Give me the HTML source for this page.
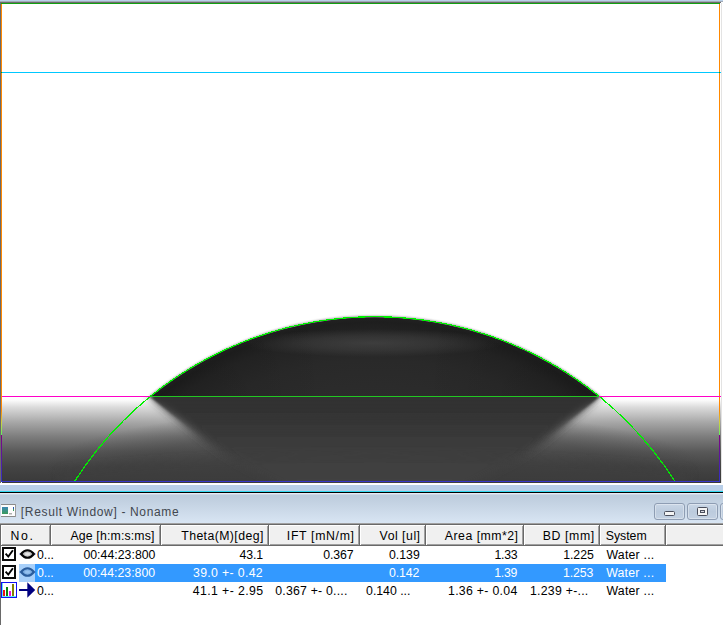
<!DOCTYPE html>
<html><head><meta charset="utf-8">
<style>
html,body{margin:0;padding:0;}
body{width:723px;height:625px;overflow:hidden;background:#fff;font-family:"Liberation Sans",sans-serif;position:relative;}
#img{position:absolute;left:0;top:0;width:723px;height:495px;display:block;}
#title{position:absolute;left:0;top:495px;width:723px;height:28px;background:linear-gradient(#bccbdc,#d8e5f3);}
.tx{position:absolute;white-space:nowrap;}
.hd{position:absolute;top:525px;height:20px;background:#f0f0f0;border-right:1px solid #696969;border-bottom:1px solid #696969;box-shadow:inset 1px 1px 0 #fff, inset -1px -1px 0 #a0a0a0;}
.selbg{position:absolute;left:35px;top:564px;width:631px;height:18px;background:#3399ff;}
.selic{position:absolute;left:19px;top:564px;width:16px;height:18px;background:#a8d0fa;}
.cb{position:absolute;left:2px;width:9px;height:9px;border:2px solid #111;background:#fff;}
.wb{position:absolute;top:503px;height:15px;border:1px solid #8e9db3;border-radius:3px;background:linear-gradient(#c9d6e6,#bccbdd 50%,#c3d1e2);box-shadow:inset 0 0 0 1px rgba(255,255,255,0.35);}
</style></head><body>
<svg id="img" viewBox="0 0 723 495">
<defs>
<linearGradient id="sub" x1="0" y1="0" x2="0" y2="1">
<stop offset="0" stop-color="#ffffff"/>
<stop offset="0.035" stop-color="#fcfcfc"/>
<stop offset="0.116" stop-color="#dcdcdc"/>
<stop offset="0.29" stop-color="#a8a8a8"/>
<stop offset="0.465" stop-color="#7c7c7c"/>
<stop offset="0.64" stop-color="#585858"/>
<stop offset="0.81" stop-color="#444444"/>
<stop offset="1" stop-color="#393939"/>
</linearGradient>
<linearGradient id="reflh" x1="150" y1="0" x2="599" y2="0" gradientUnits="userSpaceOnUse">
<stop offset="0" stop-color="#fff" stop-opacity="0.10"/><stop offset="0.3" stop-color="#fff" stop-opacity="0.03"/><stop offset="0.5" stop-color="#fff" stop-opacity="0"/><stop offset="0.7" stop-color="#fff" stop-opacity="0.03"/><stop offset="1" stop-color="#fff" stop-opacity="0.10"/>
</linearGradient>
<radialGradient id="shade" cx="0.5" cy="0.5" r="0.5">
<stop offset="0" stop-color="#383838" stop-opacity="0.55"/><stop offset="0.7" stop-color="#383838" stop-opacity="0.4"/><stop offset="1" stop-color="#303030" stop-opacity="0"/>
</radialGradient>
<linearGradient id="refl" x1="0" y1="397" x2="0" y2="481" gradientUnits="userSpaceOnUse">
<stop offset="0" stop-color="#303030"/><stop offset="0.5" stop-color="#3a3a3a"/><stop offset="1" stop-color="#424242"/>
</linearGradient>
<linearGradient id="dropv" x1="0" y1="316" x2="0" y2="397" gradientUnits="userSpaceOnUse">
<stop offset="0" stop-color="#1c1c1c"/><stop offset="0.5" stop-color="#2c2c2c"/><stop offset="1" stop-color="#303030"/>
</linearGradient>
<radialGradient id="dropr" cx="374.8" cy="672.5" r="355.8" gradientUnits="userSpaceOnUse">
<stop offset="0.77" stop-color="#2c2c2c"/><stop offset="0.88" stop-color="#292929"/><stop offset="0.95" stop-color="#242424"/><stop offset="0.985" stop-color="#1e1e1e"/><stop offset="1" stop-color="#222222"/>
</radialGradient>
<linearGradient id="droph" x1="150" y1="0" x2="599" y2="0" gradientUnits="userSpaceOnUse">
<stop offset="0" stop-color="#000" stop-opacity="0.12"/><stop offset="0.22" stop-color="#000" stop-opacity="0.06"/><stop offset="0.4" stop-color="#000" stop-opacity="0"/><stop offset="0.6" stop-color="#000" stop-opacity="0"/><stop offset="0.78" stop-color="#000" stop-opacity="0.06"/><stop offset="1" stop-color="#000" stop-opacity="0.12"/>
</linearGradient>
<radialGradient id="hl" cx="0.5" cy="0.5" r="0.5">
<stop offset="0" stop-color="#555" stop-opacity="0.5"/><stop offset="0.5" stop-color="#555" stop-opacity="0.3"/><stop offset="1" stop-color="#555" stop-opacity="0"/>
</radialGradient>
<linearGradient id="mg" x1="0" y1="397" x2="0" y2="436" gradientUnits="userSpaceOnUse"><stop offset="0" stop-color="#fff"/><stop offset="1" stop-color="#000"/></linearGradient>
<mask id="mtop" maskUnits="userSpaceOnUse" x="0" y="390" width="723" height="100"><rect x="0" y="390" width="723" height="100" fill="url(#mg)"/></mask>
<filter id="bl1" x="-5%" y="-20%" width="110%" height="140%"><feGaussianBlur stdDeviation="1.1"/></filter>
<filter id="bl" x="-20%" y="-20%" width="140%" height="140%"><feGaussianBlur stdDeviation="4"/></filter>
<filter id="bl2" x="-20%" y="-50%" width="140%" height="200%"><feGaussianBlur stdDeviation="5"/></filter>
<clipPath id="cdrop"><path d="M150.300 397 A355.8 355.8 0 0 1 599.300 397 Z"/></clipPath>
<clipPath id="cs"><rect x="2" y="397" width="719" height="86"/></clipPath>
<clipPath id="cimg"><rect x="2" y="4" width="717" height="478"/></clipPath>
<linearGradient id="le" x1="0" y1="0" x2="0" y2="1">
<stop offset="0" stop-color="#ff8800"/><stop offset="0.5" stop-color="#d0d040"/><stop offset="1" stop-color="#60f060"/>
</linearGradient>
<linearGradient id="lp" x1="0" y1="0" x2="0" y2="1">
<stop offset="0" stop-color="#800080"/><stop offset="1" stop-color="#3030c8"/>
</linearGradient>
</defs>
<rect x="0" y="0" width="723" height="495" fill="#fff"/>
<!-- top chrome -->
<rect x="0" y="0" width="723" height="1" fill="#b9d1ea"/>
<rect x="0" y="1" width="723" height="1" fill="#a2abb8"/>
<rect x="0" y="2" width="721" height="1" fill="#6a6a6a"/>
<rect x="0" y="2" width="1" height="481" fill="#6a6a6a"/>
<rect x="0" y="483" width="723" height="12" fill="#fff"/>
<rect x="721" y="3" width="1" height="480" fill="#e3e3e3"/>
<!-- substrate -->
<rect x="2" y="397" width="719" height="86" fill="url(#sub)"/>
<g clip-path="url(#cs)">
<ellipse cx="374.8" cy="470" rx="330" ry="62" fill="url(#shade)"/>
<path d="M150.300 380 L150.300 397 L204 440 Q240 468 300 492 L449.600 492 Q509.600 468 545.600 440 L599.300 397 L599.300 380 Z" fill="url(#refl)" filter="url(#bl)"/>
<g mask="url(#mtop)"><path d="M150.300 380 L150.300 397 L204 440 Q240 468 300 492 L449.600 492 Q509.600 468 545.600 440 L599.300 397 L599.300 380 Z" fill="url(#refl)" filter="url(#bl1)"/></g>
<path d="M60 470 Q374 440 690 470 L690 500 L60 500 Z" fill="#404040" opacity="0.45" filter="url(#bl)"/>
</g>
<!-- drop -->
<path d="M150.300 397 A355.8 355.8 0 0 1 599.300 397" fill="none" stroke="#8c8c8c" stroke-width="2.4" filter="url(#bl1)"/>
<g clip-path="url(#cdrop)">
<rect x="140" y="310" width="470" height="90" fill="url(#dropr)"/>
<rect x="140" y="310" width="470" height="90" fill="url(#droph)"/>
<ellipse cx="373" cy="343" rx="130" ry="14" fill="url(#hl)"/>
</g>
<!-- circle fit -->
<g clip-path="url(#cimg)"><circle cx="374.8" cy="672.5" r="355.8" fill="none" stroke="#00f000" stroke-width="1.2" shape-rendering="crispEdges"/></g>
<!-- lines -->
<rect x="1" y="3" width="719" height="1" fill="#10a010"/>
<rect x="1" y="4" width="1" height="406" fill="#ff8800"/>
<rect x="1" y="410" width="1" height="25" fill="url(#le)"/>
<rect x="1" y="435" width="1" height="47" fill="url(#lp)"/>
<rect x="719" y="4" width="1" height="406" fill="#ff8800"/>
<rect x="719" y="410" width="1" height="25" fill="url(#le)"/>
<rect x="719" y="435" width="1" height="47" fill="url(#lp)"/>
<rect x="2" y="72" width="719" height="1" fill="#00c8ff"/><rect x="1" y="72" width="1" height="1" fill="#10a010"/><rect x="719" y="72" width="1" height="1" fill="#10a010"/>
<rect x="2" y="396" width="148" height="1" fill="#ff00c8"/>
<rect x="150" y="396" width="449" height="1" fill="#22c822"/>
<rect x="599" y="396" width="122" height="1" fill="#ff00c8"/>
<rect x="1" y="481" width="719" height="1" fill="#3838c8"/>
<!-- bottom chrome -->
<rect x="0" y="483" width="723" height="2" fill="#ffffff"/>
<rect x="0" y="485" width="723" height="6" fill="#b9cfe8"/>
<rect x="0" y="491" width="723" height="1" fill="#30d8f0"/>
<rect x="0" y="492" width="723" height="1" fill="#000000"/>
<rect x="0" y="493" width="723" height="1" fill="#e6eaf5"/>
<rect x="0" y="494" width="723" height="1" fill="#ccd8e8"/>
</svg>
<div id="title"></div>
<!-- title icon -->
<svg style="position:absolute;left:1px;top:504px" width="15" height="13" viewBox="0 0 15 13">
<rect x="0" y="0" width="15" height="13" fill="#fdfdfd"/>
<rect x="0" y="0" width="15" height="1" fill="#8a8a8a"/><rect x="0" y="12" width="15" height="1" fill="#8a8a8a"/><rect x="14" y="0" width="1" height="13" fill="#9a9a9a"/>
<defs><linearGradient id="ig" x1="0" y1="0" x2="0" y2="1"><stop offset="0" stop-color="#3c86b4"/><stop offset="1" stop-color="#3a9c5c"/></linearGradient></defs>
<rect x="1" y="3" width="6" height="7" fill="url(#ig)"/>
<rect x="8" y="9" width="3" height="1.5" fill="#b0b0b0"/>
<rect x="12" y="3" width="1" height="2" fill="#2a5ab0"/><rect x="12" y="5" width="1" height="2" fill="#3a9c5c"/>
</svg>
<!-- window buttons -->
<div class="wb" style="left:654px;width:29px"></div>
<div class="wb" style="left:687px;width:29px"></div>
<div class="wb" style="left:720px;width:29px"></div>
<svg style="position:absolute;left:654px;top:503px" width="69" height="17" viewBox="0 0 69 17">
<rect x="10.5" y="8.5" width="10" height="4" rx="1" fill="#f4f4f4" stroke="#4a4e5c"/>
<rect x="43.500" y="4.500" width="10" height="8" rx="1" fill="#f4f4f4" stroke="#4a4e5c"/>
<rect x="46.5" y="7.500" width="4" height="2" fill="#d8d8e0" stroke="#4a4e5c"/>
</svg>
<!-- table -->
<div style="position:absolute;left:0;top:523px;width:723px;height:1px;background:#a0a0a0"></div>
<div style="position:absolute;left:0;top:524px;width:723px;height:1px;background:#696969"></div>
<div style="position:absolute;left:0;top:524px;width:1px;height:101px;background:#696969"></div>
<div class="hd" style="left:1px;width:49px"></div>
<div class="hd" style="left:51px;width:109px"></div>
<div class="hd" style="left:161px;width:107px"></div>
<div class="hd" style="left:269px;width:90px"></div>
<div class="hd" style="left:360px;width:65px"></div>
<div class="hd" style="left:426px;width:97px"></div>
<div class="hd" style="left:524px;width:75px"></div>
<div class="hd" style="left:600px;width:65px"></div>
<div class="hd" style="left:666px;width:70px;border-right:none"></div>
<div class="selic"></div><div class="selbg"></div>
<!-- icons -->
<svg style="position:absolute;left:0;top:545px" width="40" height="56" viewBox="0 545 40 56">
<rect x="3" y="548" width="12" height="12" fill="#fff" stroke="#0a0a0a" stroke-width="2"/>
<rect x="3" y="566" width="12" height="12" fill="#fff" stroke="#0a0a0a" stroke-width="2"/>
<path d="M5.600 553.6 L8.300 556.6 L12.900 550.2" fill="none" stroke="#000" stroke-width="1.9"/>
<path d="M5.600 571.6 L8.300 574.6 L12.900 568.2" fill="none" stroke="#000" stroke-width="1.9"/>
<!-- eye 1 -->
<rect x="19.500" y="553.5" width="16" height="1" fill="#1a1a9a"/>
<path d="M21 554 Q27.500 546.4 34 554 Q27.500 561.6 21 554 Z" fill="#c4c4c4" stroke="#050505" stroke-width="2.1" stroke-linejoin="bevel"/>
<ellipse cx="27.500" cy="554" rx="2.6" ry="1.500" fill="#e4e4e4"/>
<!-- eye 2 -->
<rect x="19.500" y="571.5" width="16" height="1" fill="#3a68b8"/>
<path d="M21 572 Q27.500 564.4 34 572 Q27.500 579.6 21 572 Z" fill="#7fb0e4" stroke="#2a5c9c" stroke-width="2.1" stroke-linejoin="bevel"/>
<ellipse cx="27.500" cy="572" rx="2.6" ry="1.500" fill="#96c2f0"/>
<!-- chart icon -->
<rect x="1.500" y="582.5" width="15" height="15" fill="#fff" stroke="#1010f0" stroke-width="1"/>
<rect x="2" y="583" width="1" height="14" fill="#60e8f8"/><rect x="2" y="596" width="14" height="1" fill="#60e8f8"/>
<rect x="3" y="590" width="2" height="6" fill="#f01010"/>
<rect x="6" y="587" width="2" height="9" fill="#0a800a"/>
<rect x="9" y="591" width="2" height="5" fill="#f010e0"/>
<rect x="12" y="584" width="2" height="12" fill="#808000"/>
<!-- arrow -->
<rect x="19" y="589" width="9" height="2" fill="#000080"/>
<path d="M27.300 582.3 L35.200 590 L27.300 597.700 Z" fill="#000080"/>
</svg>
<span id="t0" class="tx" style="left:20.85px;top:502px;line-height:20px;font-size:12.0px;letter-spacing:0.657px;color:#42474f">[Result Window] - Noname</span>
<span id="h0" class="tx" style="left:10.55px;top:526px;line-height:20px;font-size:12.3px;letter-spacing:1.597px;color:#000">No.</span>
<span id="h1" class="tx" style="left:70.46px;top:526px;line-height:20px;font-size:12.3px;letter-spacing:0.155px;color:#000">Age [h:m:s:ms]</span>
<span id="h2" class="tx" style="left:181.22px;top:526px;line-height:20px;font-size:12.3px;letter-spacing:0.405px;color:#000">Theta(M)[deg]</span>
<span id="h3" class="tx" style="left:286.84px;top:526px;line-height:20px;font-size:12.3px;letter-spacing:0.659px;color:#000">IFT [mN/m]</span>
<span id="h4" class="tx" style="left:379.62px;top:526px;line-height:20px;font-size:12.3px;letter-spacing:0.501px;color:#000">Vol [ul]</span>
<span id="h5" class="tx" style="left:444.82px;top:526px;line-height:20px;font-size:12.3px;letter-spacing:0.488px;color:#000">Area [mm*2]</span>
<span id="h6" class="tx" style="left:542.84px;top:526px;line-height:20px;font-size:12.3px;letter-spacing:0.583px;color:#000">BD [mm]</span>
<span id="h7" class="tx" style="left:605.71px;top:526px;line-height:20px;font-size:12.3px;letter-spacing:-0.010px;color:#000">System</span>
<span id="a0" class="tx" style="left:37.10px;top:546px;line-height:18px;font-size:12.3px;letter-spacing:-0.058px;color:#000">0...</span>
<span id="a1" class="tx" style="left:83.38px;top:546px;line-height:18px;font-size:12.3px;letter-spacing:0.026px;color:#000">00:44:23:800</span>
<span id="a2" class="tx" style="left:239.50px;top:546px;line-height:18px;font-size:12.3px;letter-spacing:-0.132px;color:#000">43.1</span>
<span id="a3" class="tx" style="left:323.36px;top:546px;line-height:18px;font-size:12.3px;letter-spacing:-0.141px;color:#000">0.367</span>
<span id="a4" class="tx" style="left:389.07px;top:546px;line-height:18px;font-size:12.3px;letter-spacing:-0.029px;color:#000">0.139</span>
<span id="a5" class="tx" style="left:494.42px;top:546px;line-height:18px;font-size:12.3px;letter-spacing:-0.224px;color:#000">1.33</span>
<span id="a6" class="tx" style="left:563.21px;top:546px;line-height:18px;font-size:12.3px;letter-spacing:-0.057px;color:#000">1.225</span>
<span id="a7" class="tx" style="left:606.46px;top:546px;line-height:18px;font-size:12.3px;letter-spacing:0.229px;color:#000">Water ...</span>
<span id="b0" class="tx" style="left:36.90px;top:564px;line-height:18px;font-size:12.3px;letter-spacing:-0.096px;color:#fff">0...</span>
<span id="b1" class="tx" style="left:83.24px;top:564px;line-height:18px;font-size:12.3px;letter-spacing:0.004px;color:#fff">00:44:23:800</span>
<span id="b2" class="tx" style="left:193.00px;top:564px;line-height:18px;font-size:12.3px;letter-spacing:0.339px;color:#fff">39.0 +- 0.42</span>
<span id="b4" class="tx" style="left:388.98px;top:564px;line-height:18px;font-size:12.3px;letter-spacing:-0.081px;color:#fff">0.142</span>
<span id="b5" class="tx" style="left:494.18px;top:564px;line-height:18px;font-size:12.3px;letter-spacing:-0.231px;color:#fff">1.39</span>
<span id="b6" class="tx" style="left:563.00px;top:564px;line-height:18px;font-size:12.3px;letter-spacing:-0.093px;color:#fff">1.253</span>
<span id="b7" class="tx" style="left:606.16px;top:564px;line-height:18px;font-size:12.3px;letter-spacing:0.238px;color:#fff">Water ...</span>
<span id="c0" class="tx" style="left:37.10px;top:582px;line-height:18px;font-size:12.3px;letter-spacing:-0.058px;color:#000">0...</span>
<span id="c2" class="tx" style="left:192.85px;top:582px;line-height:18px;font-size:12.3px;letter-spacing:0.380px;color:#000">41.1 +- 2.95</span>
<span id="c3" class="tx" style="left:275.22px;top:582px;line-height:18px;font-size:12.3px;letter-spacing:0.213px;color:#000">0.367 +- 0....</span>
<span id="c4" class="tx" style="left:366.07px;top:582px;line-height:18px;font-size:12.3px;letter-spacing:-0.011px;color:#000">0.140 ...</span>
<span id="c5" class="tx" style="left:448.00px;top:582px;line-height:18px;font-size:12.3px;letter-spacing:0.304px;color:#000">1.36 +- 0.04</span>
<span id="c6" class="tx" style="left:529.98px;top:582px;line-height:18px;font-size:12.3px;letter-spacing:0.259px;color:#000">1.239 +-...</span>
<span id="c7" class="tx" style="left:606.46px;top:582px;line-height:18px;font-size:12.3px;letter-spacing:0.229px;color:#000">Water ...</span>
</body></html>
